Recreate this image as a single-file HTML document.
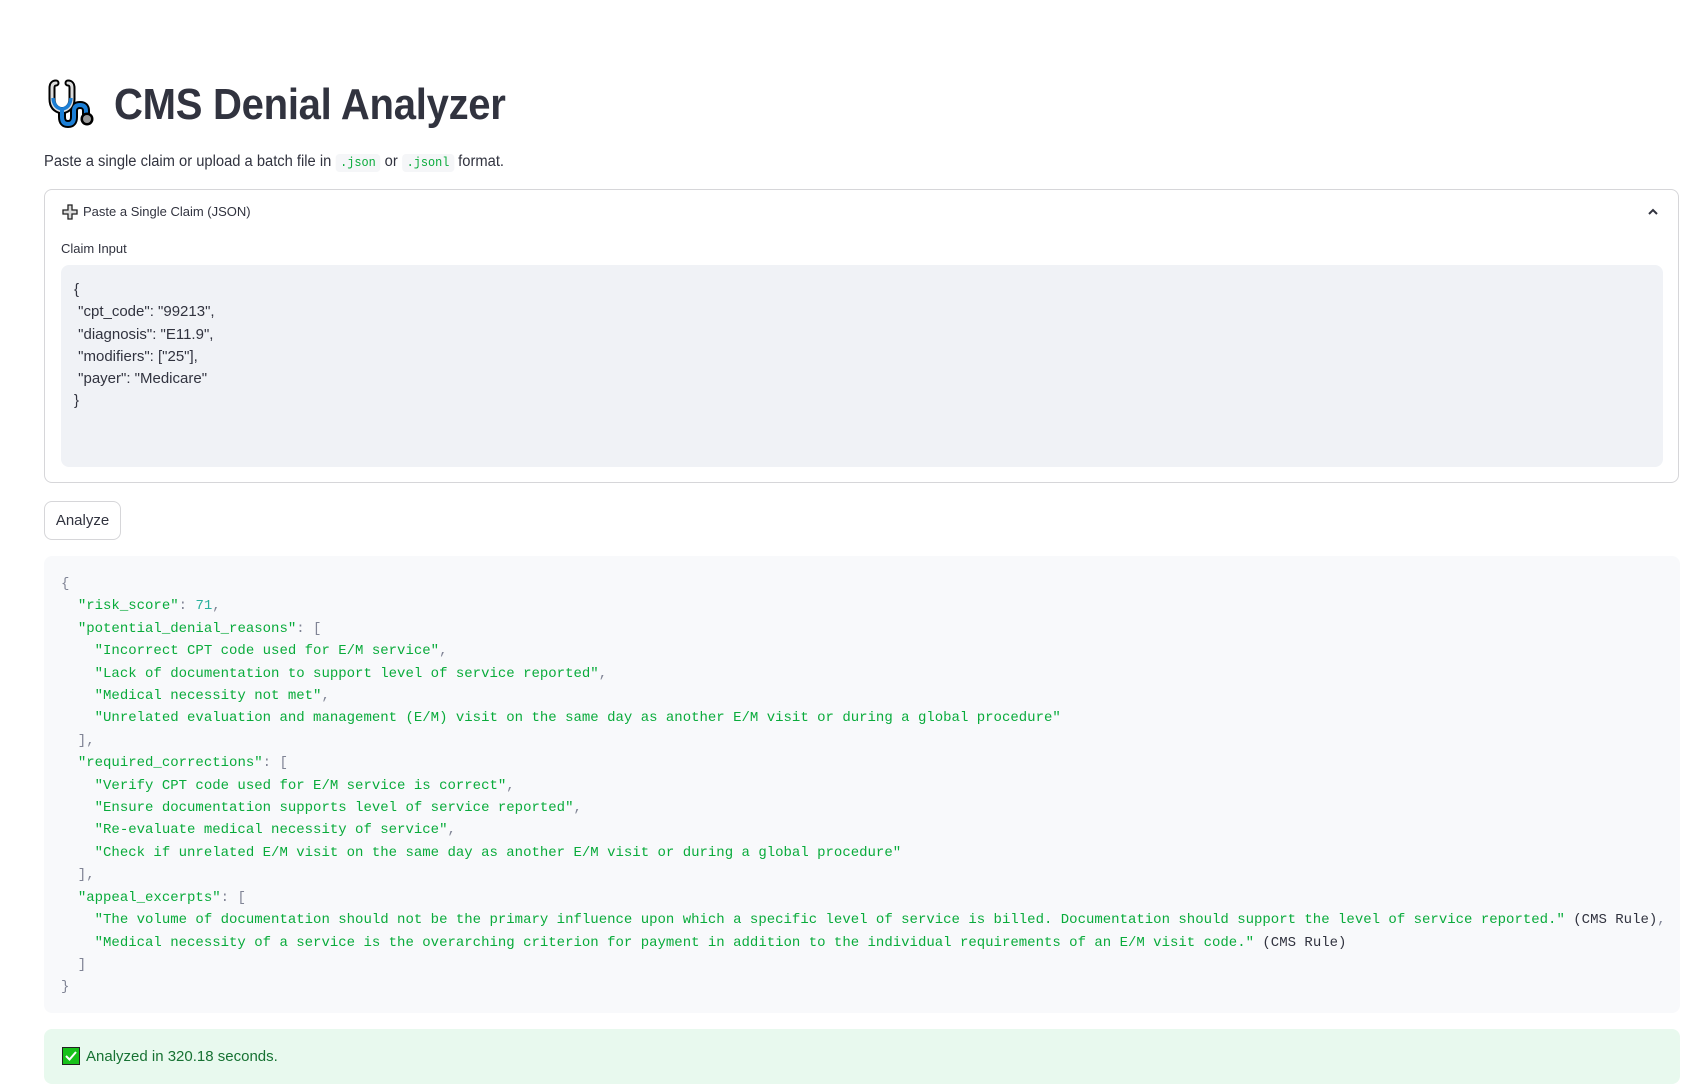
<!DOCTYPE html>
<html><head><meta charset="utf-8"><style>
body{margin:0;background:#fff;width:1690px;height:1091px;overflow:hidden;font-family:"Liberation Sans",sans-serif;color:#31333f;position:relative}
.abs{position:absolute}
h1{position:absolute;left:114px;top:80px;margin:0;font-size:44px;font-weight:bold;color:#31333f;letter-spacing:-0.3px;transform:scaleX(0.91);transform-origin:0 0;white-space:nowrap}
.sub{left:44px;top:153px;font-size:15.5px;transform:scaleX(0.95);transform-origin:0 0;white-space:nowrap}
code{font-family:"Liberation Mono",monospace;font-size:12.5px;background:#f5f6f8;color:#09ab3b;padding:2px 5px;border-radius:4px}
.exp{left:44px;top:189px;width:1633px;height:292px;border:1px solid #d6d6d9;border-radius:8px}
.ta{left:61px;top:265px;width:1602px;height:202px;background:#f0f2f6;border-radius:8px}
.ta pre{margin:0;position:absolute;left:13px;top:14px;font-family:"Liberation Sans",sans-serif;font-size:15px;line-height:22.3px;color:#31333f}
.btn{left:44px;top:501px;width:75px;height:37px;border:1px solid #d6d6d9;border-radius:8px;font-size:15px;line-height:37px;text-align:center}
.code{left:44px;top:556px;width:1636px;height:457px;background:#f8f9fb;border-radius:8px}
.code pre{margin:0;position:absolute;left:17px;top:17px;font-family:"Liberation Mono",monospace;font-size:14px;line-height:22.4px;color:#808495}
.s{color:#09ab3b}.n{color:#29b09d}.d{color:#31333f}
.ok{left:44px;top:1029px;width:1636px;height:55px;background:#e8f9ee;border-radius:8px}
</style></head><body>
<svg class="abs" style="left:48px;top:79px" width="50" height="50" viewBox="0 0 50 50">
<path d="M8 4 Q4 4 4 9 V20 Q4 30 14 32 Q24 30 24 20 V9 Q24 4 20 4" fill="none" stroke="#000" stroke-width="7" stroke-linecap="round"/>
<path d="M14 32 V38 Q14 45 20 45 Q26 45 26 38 V32 Q26 26 32 26 Q38 26 38 32 V36" fill="none" stroke="#000" stroke-width="8" stroke-linecap="round"/>
<path d="M8 4 Q4 4 4 9 V20 Q4 30 14 32 Q24 30 24 20 V9 Q24 4 20 4" fill="none" stroke="#ddd" stroke-width="3" stroke-linecap="round"/>
<path d="M5 19 Q6 29 14 30 Q22 29 23 19" fill="none" stroke="#1c7fd6" stroke-width="3.5"/>
<path d="M14 32 V38 Q14 45 20 45 Q26 45 26 38 V32 Q26 26 32 26 Q38 26 38 32 V36" fill="none" stroke="#1c7fd6" stroke-width="4" stroke-linecap="round"/>
<circle cx="39" cy="40" r="6.5" fill="#000"/><circle cx="39" cy="40" r="4" fill="#999"/>
</svg>
<h1>CMS Denial Analyzer</h1>
<div class="abs sub">Paste a single claim or upload a batch file in <code>.json</code> or <code>.jsonl</code> format.</div>
<div class="abs exp"></div>
<svg class="abs" style="left:62px;top:204px" width="16" height="16" viewBox="0 0 16 16"><path d="M6 1h4v5h5v4h-5v5h-4v-5h-5v-4h5z" fill="#ddd" stroke="#222" stroke-width="1.3"/></svg>
<div class="abs" style="left:83px;top:204px;font-size:13px">Paste a Single Claim (JSON)</div>
<svg class="abs" style="left:1647px;top:207px" width="12" height="9" viewBox="0 0 12 9"><path d="M2 7L6 3L10 7" fill="none" stroke="#31333f" stroke-width="2"/></svg>
<div class="abs" style="left:61px;top:241px;font-size:13px">Claim Input</div>
<div class="abs ta"><pre>{
 "cpt_code": "99213",
 "diagnosis": "E11.9",
 "modifiers": ["25"],
 "payer": "Medicare"
}</pre></div>
<div class="abs btn">Analyze</div>
<div class="abs code"><pre>{
  <span class="s">"risk_score"</span>: <span class="n">71</span>,
  <span class="s">"potential_denial_reasons"</span>: [
    <span class="s">"Incorrect CPT code used for E/M service"</span>,
    <span class="s">"Lack of documentation to support level of service reported"</span>,
    <span class="s">"Medical necessity not met"</span>,
    <span class="s">"Unrelated evaluation and management (E/M) visit on the same day as another E/M visit or during a global procedure"</span>
  ],
  <span class="s">"required_corrections"</span>: [
    <span class="s">"Verify CPT code used for E/M service is correct"</span>,
    <span class="s">"Ensure documentation supports level of service reported"</span>,
    <span class="s">"Re-evaluate medical necessity of service"</span>,
    <span class="s">"Check if unrelated E/M visit on the same day as another E/M visit or during a global procedure"</span>
  ],
  <span class="s">"appeal_excerpts"</span>: [
    <span class="s">"The volume of documentation should not be the primary influence upon which a specific level of service is billed. Documentation should support the level of service reported."</span> <span class="d">(CMS Rule)</span>,
    <span class="s">"Medical necessity of a service is the overarching criterion for payment in addition to the individual requirements of an E/M visit code."</span> <span class="d">(CMS Rule)</span>
  ]
}</pre></div>
<div class="abs ok"></div>
<svg class="abs" style="left:62px;top:1047px" width="18" height="18" viewBox="0 0 18 18"><rect x="0.5" y="0.5" width="17" height="17" fill="#17c11a" stroke="#222"/><path d="M4 9l3.5 3.5L14 5" fill="none" stroke="#fff" stroke-width="2"/></svg>
<div class="abs" style="left:86px;top:1048px;font-size:15px;color:#177233">Analyzed in 320.18 seconds.</div>
</body></html>
